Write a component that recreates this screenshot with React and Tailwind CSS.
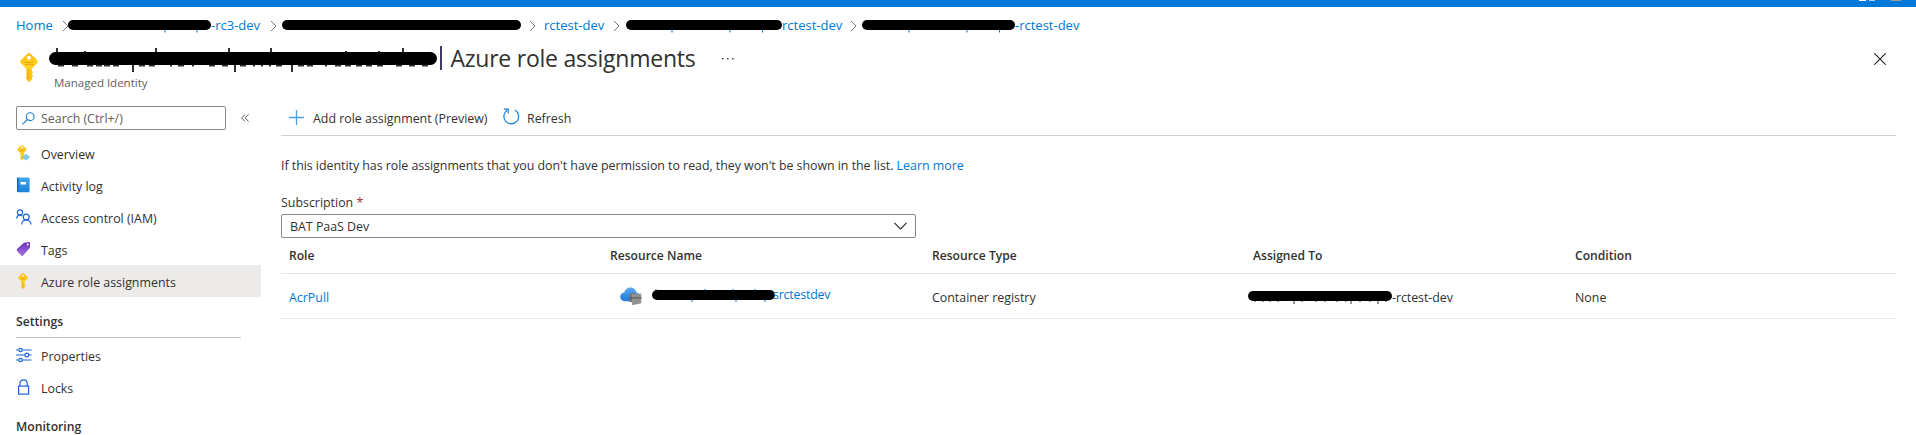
import React from 'react';

function Crumb({ className }) {
  return (
    <svg className={'shrink-0 ' + className} width="7" height="12" viewBox="0 0 7 12" fill="none" stroke="#777" strokeWidth="1">
      <path d="M1 1l5 5-5 5" />
    </svg>
  );
}

/* Black marker strip; marks are the bits of letters that stick out above and below it: [x, y1, y2, thickness]. */
function Strip({ w, h, className = '', marks = [], color = '#0078d4', t = 1 }) {
  return (
    <svg className={'shrink-0 overflow-visible ' + className} width={w} height={h} viewBox={`0 0 ${w} ${h}`}>
      {marks.map(([x, y1, y2, mt]) => (
        <line key={x + ':' + y1} x1={x} x2={x} y1={y1} y2={y2} stroke={color} strokeWidth={mt || t} />
      ))}
      <rect width={w} height={h} rx={h / 2} fill="#000" />
    </svg>
  );
}

function KeyIcon({ w, h, id }) {
  return (
    <svg width={w} height={h} viewBox="0 0 18 29" className="shrink-0">
      <defs>
        <linearGradient id={id} x1="0" y1="0" x2="0" y2="1">
          <stop offset="0" stopColor="#ffb915" />
          <stop offset="0.45" stopColor="#ffd51f" />
          <stop offset="1" stopColor="#fbb80f" />
        </linearGradient>
      </defs>
      <path
        fillRule="evenodd"
        fill={`url(#${id})`}
        d="M7.7.6a2 2 0 0 1 2.6 0l6.5 6.1a2.6 2.6 0 0 1 .1 3.7L12 15.800v2.100l1.200 1.300-1.200 1.300v1.200l1.200 1.300-1.200 1.300v1.600L9.800 28.500a1 1 0 0 1-1.500 0L6.300 26.200V15.800L1.100 10.400a2.600 2.600 0 0 1 .1-3.700zM9 2.800a2 2 0 1 0 0 4 2 2 0 0 0 0-4z"
      />
      <path d="M4.500 9.500h9M4.500 11.600h9" stroke="#eda410" strokeWidth="1" />
      <path d="M8.200 16v10" stroke="#f3a50c" strokeWidth="1" />
    </svg>
  );
}

function OverviewIcon() {
  return (
    <svg width="15" height="16" viewBox="0 0 15 16">
      <path
        fillRule="evenodd"
        fill="#fbcb1f"
        d="M5.200.3a1.200 1.200 0 0 1 1.600 0l3.300 3.100a1.400 1.400 0 0 1 0 2L7.700 8v1l.7.7-.7.8v.7l.7.7-.7.8v.8L6.500 15a.7.7 0 0 1-1 0l-1.100-1.300V8L1.900 5.400a1.400 1.400 0 0 1 0-2zM6 1.500a1 1 0 1 0 0 2 1 1 0 0 0 0-2z"
      />
      <path d="M3.500 5h5M3.500 6.100h5" stroke="#e9a512" strokeWidth=".6" />
      <path d="M10 8.800l4 3.400-4 3.400-4-3.400z" fill="#5fb9d8" />
      <path d="M10 9.800v4.600M7.500 12.200l2.500-2.200 2.500 2.200-2.500 2z" stroke="#c4eaf6" strokeWidth=".6" fill="none" />
    </svg>
  );
}

function LogIcon() {
  return (
    <svg width="15" height="16" viewBox="0 0 15 16">
      <defs>
        <linearGradient id="log" x1="0" y1="0" x2="0" y2="1">
          <stop offset="0" stopColor="#41a9ee" />
          <stop offset="1" stopColor="#1a80d6" />
        </linearGradient>
      </defs>
      <rect x="1.500" y="1" width="12.500" height="14.500" rx="1" fill="#8fc0e6" />
      <rect x="1" y=".5" width="12" height="14.500" rx="1" fill="url(#log)" />
      <rect x="1" y=".5" width="1.500" height="14.500" rx=".7" fill="#1267b4" />
      <rect x="4.500" y="5" width="5.500" height="2.600" rx=".4" fill="#fff" />
    </svg>
  );
}

function PeopleIcon() {
  return (
    <svg width="16" height="16" viewBox="0 0 16 16" fill="none" stroke="#1b64d6" strokeWidth="1.200">
      <circle cx="4" cy="3.400" r="2.600" />
      <path d="M.7 9.600C.9 7.400 2.200 6.100 4 6.100c1 0 1.800.4 2.400 1" />
      <circle cx="10.200" cy="8" r="2.900" />
      <path d="M5.600 15.500c.3-2.800 2-4.500 4.600-4.500s4.500 1.700 4.900 4.500" />
    </svg>
  );
}

function TagIcon() {
  return (
    <svg width="15" height="16" viewBox="0 0 15 16">
      <defs>
        <linearGradient id="tag" x1="0" y1="0" x2="0" y2="1">
          <stop offset="0" stopColor="#6a32c0" />
          <stop offset="1" stopColor="#a877dc" />
        </linearGradient>
      </defs>
      <path d="M.6 8.600L8 1.800l5-.6c.7 0 1 .3 1 1l-.6 4.800-7 7.600z" fill="#5b2aab" />
      <path d="M1.200 8.800L8.300 2.200l5.300-.7.3 5.200-7.300 8.200c-.3.300-.7.300-1 0L1.200 10.200a1 1 0 0 1 0-1.400z" fill="url(#tag)" />
      <circle cx="11.700" cy="3.600" r="1" fill="#fff" />
    </svg>
  );
}

function SlidersIcon() {
  return (
    <svg width="16" height="16" viewBox="0 0 16 16" fill="none" stroke="#1b64d6" strokeWidth="1.200">
      <path d="M0 3h2.600M6.400 3H15.500M0 8h8.600M13 8h2.500M0 13h2.600M6.400 13H15.500" />
      <circle cx="4.500" cy="3" r="1.700" fill="#fff" />
      <circle cx="10.800" cy="8" r="1.900" fill="#fff" />
      <circle cx="4.500" cy="13" r="1.700" fill="#fff" />
    </svg>
  );
}

function LockIcon() {
  return (
    <svg width="16" height="16" viewBox="0 0 16 16" fill="none" stroke="#1b64d6" strokeWidth="1.200">
      <rect x="2.600" y="7.100" width="10" height="8" />
      <path d="M4 7V4.200C4 2.200 5.500.800 7.600.800s3.600 1.400 3.600 3.400V7" />
    </svg>
  );
}

function RegistryIcon() {
  return (
    <svg width="22" height="19" viewBox="0 0 22 19" className="shrink-0">
      <defs>
        <linearGradient id="cloud" x1="0" y1="0" x2="0" y2="1">
          <stop offset="0" stopColor="#5ea8f2" />
          <stop offset="1" stopColor="#1a7adb" />
        </linearGradient>
      </defs>
      <path d="M5 14.200C2.100 14.200.2 12.300.2 9.800c0-2.300 1.600-4 3.900-4.300C4.900 2.500 7.300.5 10.300.5c3.200 0 5.700 2.200 6.200 5.200 2.600.2 4.300 2 4.300 4.300 0 2.400-1.900 4.200-4.400 4.200z" fill="url(#cloud)" />
      <path d="M9.200 7l6.300-1.200V16L9.200 14.800z" fill="#777" />
      <path d="M12 7.400l9.400-.9V16.300L12 18.200z" fill="#9a9a9a" />
      <path d="M9.200 11l12.200-.2" stroke="#4a4a4a" strokeWidth="1" />
      <path d="M14.300 7.600v9.600M16.700 7.400v9.200M19 7.200v9" stroke="#7d7d7d" strokeWidth=".7" />
    </svg>
  );
}

function NavItem({ icon, label, active }) {
  return (
    <div className={'flex h-8 items-center pl-4 ' + (active ? 'bg-[#edebe9]' : '')}>
      <span className="flex w-[25px] shrink-0 items-center">{icon}</span>
      <span className="pt-[3px]">{label}</span>
    </div>
  );
}

const DESC = (xs) => xs.map((x) => [x, 9, 12.5]);

const TITLE_MARKS = [
  ...[8, 107, 180, 222, 354].map((x) => [x, -4, 2]),
  ...[36, 297, 330].map((x) => [x, -1, 2]),
  ...[84, 186, 243].map((x) => [x, 12, 20]),
  ...[12, 26, 41, 50, 58, 67, 93, 103, 132, 163, 176, 194, 230, 252, 261, 289, 299, 310, 320, 331, 350, 363, 376].map((x) => [x, 12, 14.5, 6]),
  ...[122, 144, 205, 213, 221, 277].map((x) => [x, 12, 14.500, 2]),
];

export default function App() {
  return (
    <div className="h-[435px] w-[1916px] overflow-hidden bg-white font-['Open_Sans','Noto_Sans',sans-serif] text-[12.4px] leading-4 text-[#323130]">
      <div className="flex h-[7px] items-start justify-end bg-[#0078d7] pr-[15px]">
        <div className="h-px w-[7px] bg-white" />
        <div className="ml-[3px] h-px w-[6px] bg-[#a9d3f5]" />
        <div className="ml-4 h-px w-[10px] bg-[#9b9b9b]" />
      </div>

      <nav className="flex h-9 items-center pl-4 text-[13px] text-[#0078d4]">
        <span className="w-[46px]">Home</span>
        <Crumb className="mt-0.5" />
        <Strip w={143} h={10} className="-ml-[1px]" marks={DESC([97, 129])} />
        <span className="w-[59px] whitespace-nowrap">-rc3-dev</span>
        <Crumb className="mt-0.5" />
        <Strip w={239} h={10} className="ml-[5px]" />
        <Crumb className="ml-2 mt-0.5" />
        <span className="ml-2 w-[69px] whitespace-nowrap">rctest-dev</span>
        <Crumb className="mt-0.5" />
        <Strip w={156} h={10} className="ml-[6px]" marks={DESC([46, 104, 136.5])} />
        <span className="w-[68px] whitespace-nowrap">rctest-dev</span>
        <Crumb className="mt-0.5" />
        <Strip w={153} h={10} className="ml-[5px]" marks={DESC([47, 105, 137.5])} />
        <span className="whitespace-nowrap">-rctest-dev</span>
      </nav>

      <header className="flex h-[63px] items-start pl-5">
        <div className="mt-[10px]">
          <KeyIcon w={18} h={29} id="keyLarge" />
        </div>
        <div className="ml-[11px]">
          <div className="flex h-[30px] items-center">
            <Strip w={388} h={13} color="#323130" t={2} marks={TITLE_MARKS} className="mt-px" />
            <div className="ml-[3px] h-6 w-[1.5px] bg-[#3b3a60]" />
            <h1 className="ml-[9px] whitespace-nowrap text-[23px] leading-[30px] tracking-[-0.24px]">Azure role assignments</h1>
            <svg className="ml-[27px]" width="12" height="3" viewBox="0 0 12 3" fill="#444">
              <rect x="0" y="1" width="1.600" height="1.400" />
              <rect x="5" y="1" width="1.600" height="1.400" />
              <rect x="10" y="1" width="1.600" height="1.400" />
            </svg>
          </div>
          <div className="ml-[5px] h-[18px] text-[11.5px] leading-[20px] text-[#605e5c]">Managed Identity</div>
        </div>
        <svg className="ml-auto mr-[30px] mt-[10px]" width="12" height="12" viewBox="0 0 12 12" stroke="#222" strokeWidth="1.100">
          <path d="M.3.3l11.400 11.400M11.700.3L.3 11.700" />
        </svg>
      </header>

      <div className="flex">
        <aside className="w-[261px] shrink-0">
          <div className="flex h-6 items-center pl-4">
            <div className="flex h-6 w-[210px] items-center rounded-[2px] border border-[#8a8886] pl-[5px]">
              <svg width="13" height="13" viewBox="0 0 13 13" fill="none" stroke="#1b7fd6" strokeWidth="1.100">
                <circle cx="8.200" cy="4.700" r="3.900" />
                <path d="M5.400 7.500L.5 12.400" />
              </svg>
              <span className="ml-[6px] pt-0.5 text-[#605e5c]">Search (Ctrl+/)</span>
            </div>
            <svg className="ml-[15px]" width="8" height="8" viewBox="0 0 8 8" fill="none" stroke="#605e5c" strokeWidth="1">
              <path d="M4 .4L.6 4 4 7.600M7.600.4L4.200 4l3.400 3.600" />
            </svg>
          </div>
          <div className="mt-[7px]">
            <NavItem icon={<OverviewIcon />} label="Overview" />
            <NavItem icon={<LogIcon />} label="Activity log" />
            <NavItem icon={<PeopleIcon />} label="Access control (IAM)" />
            <NavItem icon={<TagIcon />} label="Tags" />
            <NavItem active icon={<span className="pl-[2px]"><KeyIcon w={10} h={16} id="keySmall" /></span>} label="Azure role assignments" />
          </div>
          <div className="ml-4 mr-5 mt-[17px] h-6 border-b border-[#c8c6c4] text-[12.2px] font-semibold">Settings</div>
          <div className="mt-px">
            <NavItem icon={<SlidersIcon />} label="Properties" />
            <NavItem icon={<LockIcon />} label="Locks" />
          </div>
          <div className="ml-4 mt-4 text-[12.2px] font-semibold">Monitoring</div>
        </aside>

        <main className="ml-5 w-[1615px]">
          <div className="flex h-[30px] items-start border-b border-[#d2d0ce] pl-2">
            <svg className="mt-[4px]" width="15" height="15" viewBox="0 0 15 15" stroke="#4aa0e6" strokeWidth="1.300">
              <path d="M7.500 0v15M0 7.500h15" />
            </svg>
            <span className="ml-[9px] mt-[5px] w-[190px]">Add role assignment (Preview)</span>
            <svg className="mt-[2px]" width="17" height="17" viewBox="0 0 17 17" fill="none" stroke="#1b7fd6" strokeWidth="1.200">
              <path d="M4.300 2.200a7.400 7.400 0 1 0 7.600-.2" />
              <path d="M.8 1.200h4.400v4.400" />
            </svg>
            <span className="ml-[7px] mt-[5px]">Refresh</span>
          </div>

          <p className="mt-[22px] whitespace-nowrap">
            <span className="tracking-[-0.03px]">If this identity has role assignments that you don't have permission to read, they won't be shown in the list. </span>
            <a className="text-[#0078d4]">Learn more</a>
          </p>

          <div className="mt-[21px]">
            Subscription <span className="text-[#a4262c]">*</span>
          </div>
          <div className="mt-[3px] flex h-6 w-[635px] items-center justify-between rounded-[2px] border border-[#8a8886] pl-2 pr-2">
            <span className="pt-0.5">BAT PaaS Dev</span>
            <svg width="13" height="8" viewBox="0 0 13 8" fill="none" stroke="#323130" strokeWidth="1.200">
              <path d="M.4.800l6.100 6.100L12.600.800" />
            </svg>
          </div>

          <div className="grid h-9 grid-cols-[321px_322px_321px_322px_1fr] items-center border-b border-[#e7e6e5] pl-2 text-[12.1px] font-semibold">
            <span>Role</span>
            <span>Resource Name</span>
            <span>Resource Type</span>
            <span>Assigned To</span>
            <span>Condition</span>
          </div>
          <div className="grid h-[45px] grid-cols-[321px_322px_321px_322px_1fr] items-center border-b border-[#edebe9] pl-2">
            <a className="pt-1 text-[#0078d4]">AcrPull</a>
            <span className="flex items-center pl-[10px] text-[#0078d4]">
              <RegistryIcon />
              <span className="ml-[10px] flex items-center">
                <Strip w={123} h={10} className="-mt-0.5" marks={[[4, -1, 2], [53, -1, 2], [81, -1, 2], [103, -1, 2], [40, 9, 12], [84, 9, 12], [113, 9, 12]]} />
                <span className="-ml-[2px] -mt-[2px] tracking-[-0.2px]">srctestdev</span>
              </span>
            </span>
            <span className="pt-1">Container registry</span>
            <span className="flex items-center">
              <Strip w={144} h={10} className="-ml-[5px]" color="#323130" marks={[[7, 9, 11], [15, 9, 11], [22, 9, 11], [30, 9, 11], [46, 9, 13], [54, 9, 11], [68, 9, 11], [77, 9, 11], [89, 9, 11], [98, 9, 11], [103, 9, 13], [112, 9, 11], [122, 9, 11], [130, 9, 13], [138, 9, 11]]} />
              <span className="mt-1 whitespace-nowrap tracking-[-0.05px]">-rctest-dev</span>
            </span>
            <span className="pt-1">None</span>
          </div>
        </main>
      </div>
    </div>
  );
}
